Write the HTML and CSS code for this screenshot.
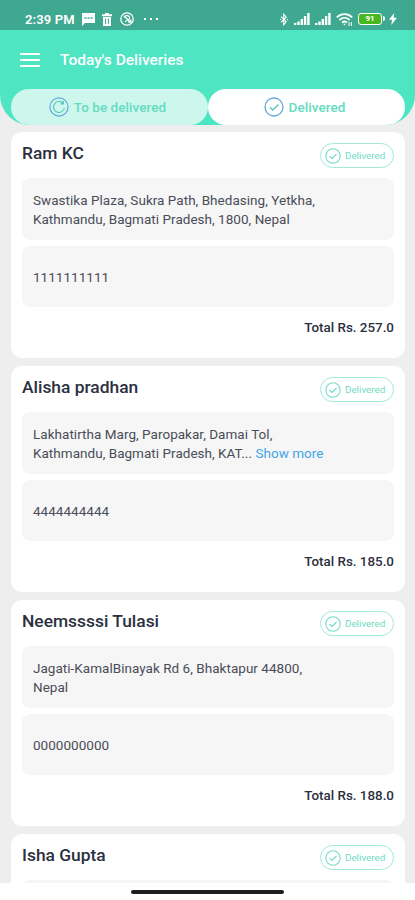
FILE: index.html
```html
<!DOCTYPE html>
<html lang="en">
<head>
  <meta charset="UTF-8">
  <meta name="viewport" content="width=device-width, initial-scale=1.0">
  <title>Today's Deliveries</title>
  <link rel="stylesheet" href="styles.css">
</head>
<body>
  <svg class="symbols" aria-hidden="true">
    <symbol id="check" viewBox="0 0 20 20">
      <circle cx="10" cy="10" r="9" fill="none" stroke="currentColor" stroke-width="1.3"/>
      <path class="mark" d="M5.8 10.3l3 2.8 5.6-5.6" fill="none" stroke-width="1.4"/>
    </symbol>
    <symbol id="signal" viewBox="0 0 16 12">
      <path d="M0 12v-2h2.4v2zM3.3 12V8.5h2.4V12zM6.6 12V6H9v6zM9.9 12V3h2.4v9zM13.2 12V0h2.4v12z" fill="currentColor"/>
    </symbol>
  </svg>

  <header class="header">
    <div class="status-bar">
      <span class="time">2:39 PM</span>
      <svg class="chat" width="15" height="13" viewBox="0 0 15 13"><path d="M1 0h13v10H4l-3 3z" fill="#fff"/><path d="M3.5 5h2M6.5 5h2M9.5 5h2" stroke="#3fa890" stroke-width="1.6"/></svg>
      <svg class="trash" width="10" height="13" viewBox="0 0 10 13"><path d="M3 0h4v1.2h3v2H0v-2h3zM1 4h8v9H1z" fill="#fff"/><path d="M3.6 5.5v5.5M6.4 5.5v5.5" stroke="#3fa890"/></svg>
      <svg class="round" width="14" height="14" viewBox="0 0 14 14" fill="none" stroke="#fff"><circle cx="7" cy="7" r="6.2" stroke-width="1.3"/><path d="M4 5.4c1-2.6 5.6-2.2 5.6.6S6 7.7 5 10M4 4l6.5 6.3M8 10.2h2.8V7.5" stroke-width="1.2"/></svg>
      <span class="dots"><i></i><i></i><i></i></span>
      <svg class="bluetooth" width="8" height="13" viewBox="0 0 8 13" fill="none" stroke="#fff" stroke-width="1.1"><path d="M1 3.6l5.2 5L3.7 11.8V1.2l2.5 3L1 9.3"/><path d="M0 6.5h1M7 6.5h1"/></svg>
      <svg class="signal" width="16" height="12"><use href="#signal"/></svg>
      <svg class="signal second" width="16" height="12"><use href="#signal"/></svg>
      <svg class="wifi" width="17" height="13" viewBox="0 0 17 13" fill="none" stroke="#fff" stroke-width="1.8"><path d="M.8 4.3c4.4-4.2 11-4.2 15.4 0M3.4 7c3-2.8 7.2-2.8 10.2 0M6 9.6c1.5-1.4 3.5-1.4 5 0"/><path d="M7.2 10.8h2.6L8.5 12.4z" fill="#fff" stroke="none"/><path d="M13 9v4M15.3 9v4" stroke-width="1"/></svg>
      <span class="battery">91</span>
      <svg class="bolt" width="8" height="12" viewBox="0 0 8 12"><path d="M5.3 0L0 6.8h3L2.3 12 8 4.8H4.7z" fill="#fff"/></svg>
    </div>
    <div class="title-bar">
      <button class="menu" aria-label="Menu"><span></span><span></span><span></span></button>
      <h1>Today's Deliveries</h1>
    </div>
    <nav class="tabs">
      <button class="tab">
        <svg width="20" height="20" viewBox="0 0 20 20" fill="none"><circle cx="10" cy="10" r="9.1" stroke="#65a9dc" stroke-width="1.2"/><path d="M14 6.2A5.5 5.5 0 1 0 15.4 11M14.4 3.8v3.1h-3.1" stroke="#5bc9c0" stroke-width="1.2"/></svg>
        <span>To be delivered</span>
      </button>
      <button class="tab active">
        <svg class="tab-check" width="20" height="20"><use href="#check"/></svg>
        <span>Delivered</span>
      </button>
    </nav>
  </header>

  <main class="list">
    <article class="card">
      <div class="card-head">
        <h2>Ram KC</h2>
        <span class="badge"><svg width="16" height="16"><use href="#check"/></svg><span>Delivered</span></span>
      </div>
      <p class="box address">Swastika Plaza, Sukra Path, Bhedasing, Yetkha,<br>Kathmandu, Bagmati Pradesh, 1800, Nepal</p>
      <p class="box phone">1111111111</p>
      <p class="total">Total Rs. 257.0</p>
    </article>
    <article class="card">
      <div class="card-head">
        <h2>Alisha pradhan</h2>
        <span class="badge"><svg width="16" height="16"><use href="#check"/></svg><span>Delivered</span></span>
      </div>
      <p class="box address">Lakhatirtha Marg, Paropakar, Damai Tol,<br>Kathmandu, Bagmati Pradesh, KAT... <a class="more">Show more</a></p>
      <p class="box phone">4444444444</p>
      <p class="total">Total Rs. 185.0</p>
    </article>
    <article class="card">
      <div class="card-head">
        <h2>Neemssssi Tulasi</h2>
        <span class="badge"><svg width="16" height="16"><use href="#check"/></svg><span>Delivered</span></span>
      </div>
      <p class="box address">Jagati-KamalBinayak Rd 6, Bhaktapur 44800,<br>Nepal</p>
      <p class="box phone">0000000000</p>
      <p class="total">Total Rs. 188.0</p>
    </article>
    <article class="card">
      <div class="card-head">
        <h2>Isha Gupta</h2>
        <span class="badge"><svg width="16" height="16"><use href="#check"/></svg><span>Delivered</span></span>
      </div>
      <p class="box address"></p>
    </article>
  </main>

  <footer class="nav-bar"><span></span></footer>
</body>
</html>
```

FILE: styles.css
```css
* {
  box-sizing: border-box;
}
body {
  margin: 0;
  height: 900px;
  display: flex;
  flex-direction: column;
  overflow: hidden;
  background: #eeeeee;
  font-family: Roboto, sans-serif;
  color: #2b3040;
}
h1, h2, p {
  margin: 0;
}
button {
  border: none;
  padding: 0;
  font-family: inherit;
}
svg {
  display: block;
  flex: none;
}
.symbols {
  position: absolute;
  width: 0;
  height: 0;
}
.mark {
  stroke: var(--mark, currentColor);
}

/* header */
.header {
  flex: none;
  height: 125px;
  background: #4ee5c2;
  border-radius: 0 0 30px 30px;
  overflow: hidden;
}
.status-bar {
  height: 30px;
  padding: 8px 18px 0 25px;
  display: flex;
  align-items: center;
  background: #3fa890;
  color: #fff;
}
.time {
  width: 56px;
  font-size: 13px;
  font-weight: 600;
  letter-spacing: 0.15px;
  white-space: nowrap;
}
.trash {
  margin-left: 6px;
}
.round {
  margin-left: 8px;
}
.dots {
  display: flex;
  gap: 4px;
  margin-left: 10px;
}
.dots i {
  width: 2px;
  height: 2px;
  background: #fff;
}
.bluetooth {
  margin-left: auto;
}
.signal {
  margin-left: 6px;
}
.second {
  margin-left: 5px;
}
.wifi {
  margin-left: 5px;
}
.battery {
  position: relative;
  width: 24px;
  height: 12px;
  margin: 0 7px 0 5px;
  border: 1.5px solid #fff;
  border-radius: 3px;
  background: #48b820;
  font-size: 8px;
  font-weight: 700;
  line-height: 10px;
  text-align: center;
}
.battery::after {
  content: "";
  position: absolute;
  right: -4px;
  top: 2px;
  width: 2px;
  height: 5px;
  border-radius: 0 2px 2px 0;
  background: #fff;
}
.title-bar {
  height: 59px;
  padding-left: 20px;
  display: flex;
  align-items: center;
}
.menu {
  width: 20px;
  margin-right: 20px;
  display: flex;
  flex-direction: column;
  gap: 4px;
  background: none;
}
.menu span {
  height: 2px;
  background: #fff;
}
h1 {
  font-size: 15.5px;
  font-weight: 500;
  color: #fff;
}
.tabs {
  display: flex;
  padding: 0 10px 0 11px;
}
.tab {
  flex: 1;
  height: 36px;
  padding-right: 4px;
  display: flex;
  align-items: center;
  justify-content: center;
  gap: 5px;
  border-radius: 18px;
  background: #cdf7ed;
  color: #63dcc1;
  font-size: 13.5px;
  font-weight: 500;
  letter-spacing: 0.06px;
}
.tab.active {
  background: #fff;
}
.tab-check {
  color: #65a9dc;
  --mark: #5bc9c0;
}

/* delivery cards */
.list {
  flex: 1;
  min-height: 0;
  overflow: hidden;
  padding: 7px 10px 0 11px;
}
.card {
  height: 226px;
  margin-bottom: 8px;
  padding: 0 11px;
  border-radius: 11px;
  background: #fff;
}
.card-head {
  height: 46px;
  display: flex;
  justify-content: space-between;
}
h2 {
  margin-top: 11px;
  font-size: 17.4px;
  line-height: 21px;
  font-weight: 500;
}
.badge {
  width: 74px;
  height: 25px;
  margin-top: 11px;
  padding-left: 4px;
  display: flex;
  align-items: center;
  gap: 4px;
  border: 1px solid #a4ead9;
  border-radius: 13px;
  color: #70dbc3;
  font-size: 9.8px;
}
.box {
  height: 62px;
  padding: 0 11px;
  border-radius: 8px;
  background: #f6f6f6;
  color: #4a4d58;
  font-size: 13.5px;
  letter-spacing: 0.03px;
  white-space: nowrap;
}
.address {
  padding-top: 13px;
  line-height: 19px;
}
.phone {
  height: 61px;
  margin-top: 6px;
  line-height: 62px;
}
.more {
  color: #42a5e8;
}
.total {
  margin-top: 13px;
  font-size: 13.4px;
  line-height: 16px;
  font-weight: 500;
  text-align: right;
}

/* gesture bar */
.nav-bar {
  flex: none;
  height: 17px;
  padding-top: 7px;
  background: #fff;
}
.nav-bar span {
  display: block;
  width: 153px;
  height: 4px;
  margin: 0 auto;
  border-radius: 2px;
  background: #1c1e1f;
}
```
